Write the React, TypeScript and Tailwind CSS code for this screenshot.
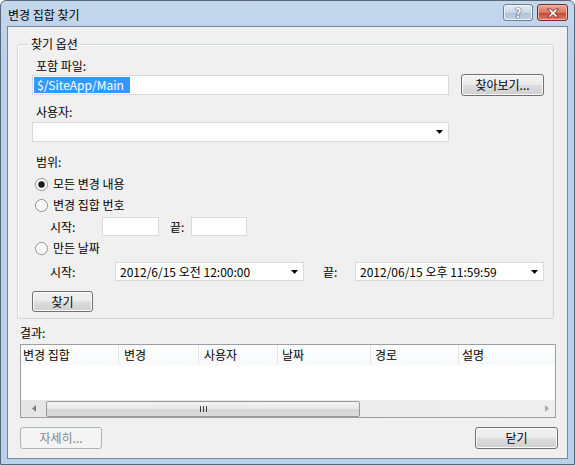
import React from "react";
import clsx from "clsx";

const font = "font-['Noto_Sans_CJK_KR','Noto_Sans',sans-serif]";

function Btn({
  children,
  className,
  disabled,
}: {
  children: React.ReactNode;
  className?: string;
  disabled?: boolean;
}) {
  return (
    <div
      className={clsx(
        "flex items-center justify-center rounded-[3px] border text-[12px] leading-[14px]",
        disabled
          ? "border-[#adb2b5] bg-[#f4f4f4] text-[#838383]"
          : "border-[#707070] bg-[linear-gradient(#f2f2f2_0%,#ebebeb_48%,#dddddd_52%,#cfcfcf_100%)] text-black shadow-[inset_0_0_0_1px_#fbfbfb]",
        className
      )}
    >
      {children}
    </div>
  );
}

function Arrow() {
  return (
    <svg width="7" height="4" viewBox="0 0 7 4" className="shrink-0">
      <path d="M0 0h7L3.5 4z" fill="#000" />
    </svg>
  );
}

function Radio({ checked, label }: { checked?: boolean; label: string }) {
  return (
    <div className="flex h-[16px] items-center">
      <svg width="13" height="13" viewBox="0 0 13 13" className="ml-[3px] shrink-0">
        <circle cx="6.5" cy="6.5" r="6" fill="#f6f6f6" stroke="#8a8a8a" />
        <circle cx="6.5" cy="6.5" r="5" fill="none" stroke="#ffffff" strokeWidth="0.8" />
        {checked && <circle cx="6.5" cy="6.5" r="3.2" fill="#1c1c1c" />}
      </svg>
      <span className="ml-[5px]">{label}</span>
    </div>
  );
}

function Combo({ value, className }: { value?: string; className?: string }) {
  return (
    <div
      className={clsx(
        "flex items-center justify-between border border-[#dadada] bg-white pl-[4px] pr-[5px]",
        className
      )}
    >
      <span>{value}</span>
      <Arrow />
    </div>
  );
}

const columns = [
  { label: "변경 집합", w: "w-[98px]", pl: "pl-[2px]" },
  { label: "변경", w: "w-[80px]", pl: "pl-[5px]" },
  { label: "사용자", w: "w-[79px]", pl: "pl-[5px]" },
  { label: "날짜", w: "w-[93px]", pl: "pl-[4px]" },
  { label: "경로", w: "w-[88px]", pl: "pl-[4px]" },
  { label: "설명", w: "flex-1", pl: "pl-[3px]" },
];

export default function App() {
  return (
    <div className={clsx("h-[465px] w-[575px] text-[12px] leading-[14px] text-black", font)}>
      <div className="flex h-[465px] w-[575px] flex-col rounded-t-[6px] border border-[#5a6779] bg-[linear-gradient(#c4d7ec,#b9d1ea_60px,#b9d1ea)]">
        {/* title bar */}
        <div className="flex h-[25px] shrink-0 items-start justify-between pl-[7px] pr-[6px]">
          <span className="pt-[7px]">변경 집합 찾기</span>
          <div className="mt-[3px] flex gap-[4px]">
            <div className="flex h-[17px] w-[30px] items-center justify-center rounded-[3px] border border-[#6f7f94] bg-[linear-gradient(#e4ecf6,#c9d7e8_50%,#aebfd6_51%,#c3d3e6)] shadow-[inset_0_0_0_1px_#eef3fa]">
              <span className="text-[13px] font-bold leading-[13px] text-white [text-shadow:0_0_1px_#3a4a60,0_0_1px_#3a4a60,0_0_1px_#3a4a60]">
                ?
              </span>
            </div>
            <div className="flex h-[17px] w-[31px] items-center justify-center rounded-[3px] border border-[#7a2a22] bg-[linear-gradient(#e9a99c,#d9765f_50%,#c4442d_51%,#d8826c)] shadow-[inset_0_0_0_1px_#f0b8ad]">
              <svg width="14" height="10" viewBox="0 0 14 10">
                <path
                  d="M1.5 1 L4.5 1 L7 3.3 L9.5 1 L12.5 1 L8.8 5 L12.5 9 L9.5 9 L7 6.7 L4.5 9 L1.5 9 L5.2 5 Z"
                  fill="#ffffff"
                  stroke="#5a1d16"
                  strokeWidth="0.8"
                  strokeLinejoin="round"
                />
              </svg>
            </div>
          </div>
        </div>

        {/* client area */}
        <div className="mx-[6px] mb-[5px] flex flex-1 flex-col border border-[#77879b] bg-[#f0f0f0]">
          {/* group box */}
          <div className="relative ml-[9px] mt-[17px] h-[275px] w-[537px] rounded-[3px] border border-[#d0d6dc] shadow-[inset_1px_1px_0_#ffffff]">
            <span className="absolute left-[10px] top-[-8px] bg-[#f0f0f0] px-[3px]">찾기 옵션</span>

            <div className="flex flex-col pl-[14px]">
              <div className="ml-[4px] mt-[14px] h-[14px]">포함 파일:</div>
              <div className="mt-[1px] flex h-[22px] items-center">
                <div className="flex h-[20px] w-[417px] items-center border border-[#dadada] bg-white p-[1px]">
                  <span className="flex h-full items-center bg-[#3399ff] pl-[3px] pr-[6px] text-white">
                    $/SiteApp/Main
                  </span>
                </div>
                <Btn className="ml-[12px] h-[22px] w-[83px]">찾아보기...</Btn>
              </div>

              <div className="ml-[4px] mt-[9px] h-[14px]">사용자:</div>
              <Combo className="mt-[3px] h-[20px] w-[417px]" />

              <div className="ml-[4px] mt-[13px] h-[14px]">범위:</div>
              <div className="mt-[7px]">
                <Radio checked label="모든 변경 내용" />
              </div>
              <div className="mt-[5px]">
                <Radio label="변경 집합 번호" />
              </div>
              <div className="mt-[4px] flex h-[19px] items-center">
                <span className="ml-[18px] w-[52px]">시작:</span>
                <div className="h-[19px] w-[57px] border border-[#dadada] bg-white" />
                <span className="ml-[11px] w-[21px]">끝:</span>
                <div className="h-[19px] w-[56px] border border-[#dadada] bg-white" />
              </div>
              <div className="mt-[4px]">
                <Radio label="만든 날짜" />
              </div>
              <div className="mt-[6px] flex h-[19px] items-center">
                <span className="ml-[18px] w-[65px]">시작:</span>
                <Combo value="2012/6/15 오전 12:00:00" className="h-[19px] w-[189px]" />
                <span className="ml-[19px] w-[32px]">끝:</span>
                <Combo value="2012/06/15 오후 11:59:59" className="h-[19px] w-[189px]" />
              </div>
              <Btn className="mt-[10px] h-[21px] w-[61px]">찾기</Btn>
            </div>
          </div>

          {/* results */}
          <div className="ml-[12px] mt-[7px] h-[14px]">결과:</div>
          <div className="ml-[12px] mt-[4px] flex h-[74px] w-[536px] flex-col border border-[#9a9fa6] bg-white">
            <div className="flex h-[20px] shrink-0 bg-[linear-gradient(#ffffff,#f7f8fa)]">
              {columns.map((c) => (
                <div
                  key={c.label}
                  className={clsx(
                    "flex h-full items-center border-r border-[#e2e5ea]",
                    c.w,
                    c.pl,
                    c.label === "설명" && "border-r-0"
                  )}
                >
                  {c.label}
                </div>
              ))}
            </div>
            <div className="flex-1" />
            {/* horizontal scrollbar */}
            <div className="flex h-[17px] shrink-0 items-center bg-[linear-gradient(90deg,#e6e6e6,#efefef)]">
              <div className="flex w-[25px] justify-center">
                <svg width="4" height="7" viewBox="0 0 4 7">
                  <path d="M4 0v7L0 3.5z" fill="#7f7f7f" />
                </svg>
              </div>
              <div className="flex h-[16px] w-[314px] items-center justify-center rounded-[2px] border border-[#979797] bg-[linear-gradient(#f4f4f4,#e6e6e6_50%,#d6d6d6_51%,#dcdcdc)]">
                <svg width="7" height="6" viewBox="0 0 7 6">
                  <path d="M0.5 0v6M3.5 0v6M6.5 0v6" stroke="#3c3c3c" strokeWidth="1" />
                </svg>
              </div>
              <div className="flex-1" />
              <div className="flex w-[17px] justify-center">
                <svg width="4" height="7" viewBox="0 0 4 7">
                  <path d="M0 0v7l4-3.5z" fill="#a8a8a8" />
                </svg>
              </div>
            </div>
          </div>

          <div className="ml-[12px] mr-[9px] mt-[9px] flex justify-between">
            <Btn disabled className="h-[22px] w-[82px]">
              자세히...
            </Btn>
            <Btn className="h-[22px] w-[83px]">닫기</Btn>
          </div>
        </div>
      </div>
    </div>
  );
}
